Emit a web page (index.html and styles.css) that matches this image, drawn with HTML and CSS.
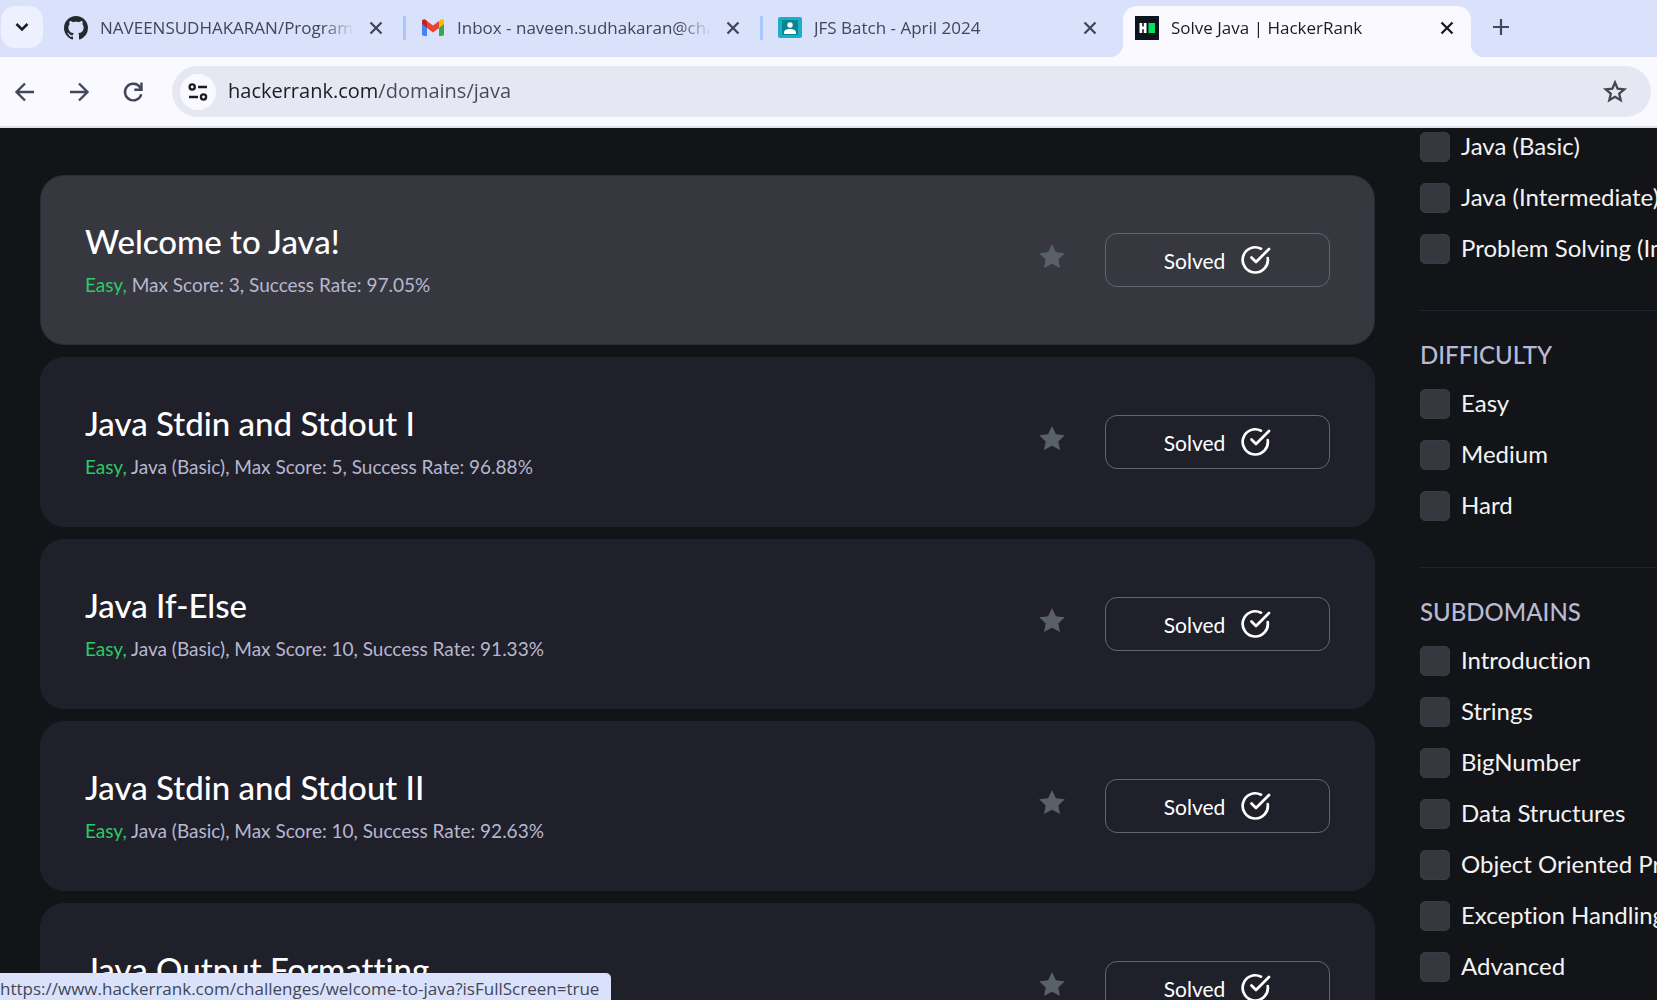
FILE: index.html
```html
<!DOCTYPE html>
<html lang="en">
<head>
<meta charset="utf-8">
<meta name="viewport" content="width=device-width, initial-scale=1">
<title>Solve Java | HackerRank</title>
<link rel="stylesheet" href="styles.css">
</head>
<body>
<svg class="defs" aria-hidden="true">
  <symbol id="close" viewBox="0 0 20 20"><path d="M4.500 4.500l11 11M15.500 4.500l-11 11" fill="none" stroke="currentColor" stroke-width="2.300"/></symbol>
  <symbol id="star" viewBox="0 0 26 32"><path d="M13 0l3.900 8.200 8.900 1.100-6.500 6.200 1.700 8.500-8-4.200-8 4.200 1.700-8.500L.2 9.300l8.900-1.100z" fill="currentColor"/></symbol>
  <symbol id="check" viewBox="0 0 30 30"><path d="M20 3.700A12.600 12.600 0 1 0 26.700 13M10.500 12.500l4.500 4.500L28 4" fill="none" stroke="currentColor" stroke-width="2.700" stroke-linecap="round" stroke-linejoin="round"/></symbol>
</svg>

<header class="browser">
  <div class="tab-strip">
    <button class="tab-search" aria-label="Search tabs"><svg width="16" height="16" viewBox="0 0 16 16"><path d="M2.500 5l5.500 5.500L13.500 5" fill="none" stroke="currentColor" stroke-width="2.500"/></svg></button>
    <div class="tabs">
      <div class="tab">
        <svg class="favicon" viewBox="0 0 16 16"><path fill="#24292f" d="M8 0C3.580 0 0 3.580 0 8c0 3.540 2.290 6.530 5.470 7.590.4.070.55-.17.55-.38 0-.19-.01-.82-.01-1.490-2.010.37-2.530-.49-2.690-.94-.09-.23-.48-.94-.82-1.130-.28-.15-.68-.52-.01-.53.63-.01 1.080.58 1.230.82.72 1.210 1.870.87 2.330.66.07-.52.28-.87.51-1.070-1.780-.2-3.640-.89-3.640-3.950 0-.87.31-1.590.82-2.150-.08-.2-.36-1.020.08-2.120 0 0 .67-.21 2.200.82.64-.18 1.320-.27 2-.27s1.360.09 2 .27c1.530-1.040 2.200-.82 2.200-.82.44 1.100.16 1.920.08 2.120.51.56.82 1.270.82 2.150 0 3.070-1.870 3.750-3.650 3.950.29.25.54.73.54 1.480 0 1.070-.01 1.930-.01 2.200 0 .21.15.46.55.38A8.010 8.010 0 0 0 16 8c0-4.420-3.580-8-8-8z"/></svg>
        <span class="tab-title">NAVEENSUDHAKARAN/Programs</span>
        <button class="tab-close" aria-label="Close tab"><svg><use href="#close"/></svg></button>
      </div>
      <div class="tab">
        <svg class="favicon" viewBox="0 0 24 24"><path fill="#4285f4" d="M1 5l5 4v12H3a2 2 0 0 1-2-2z" transform="translate(0 -1)"/><path fill="#34a853" d="M18 8l5-4v14a2 2 0 0 1-2 2h-3z"/><path fill="#ea4335" d="M6 5l6 4.500L18 5v7l-6 4.500L6 12z"/><path fill="#fbbc04" d="M18 12V5l1.500-1.200C21 2.700 23 3.700 23 5.500V8z"/><path fill="#c5221f" d="M6 12V5L4.500 3.800C3 2.700 1 3.700 1 5.500V8z"/></svg>
        <span class="tab-title">Inbox - naveen.sudhakaran@chandusoft</span>
        <button class="tab-close" aria-label="Close tab"><svg><use href="#close"/></svg></button>
      </div>
      <div class="tab">
        <svg class="favicon" viewBox="0 0 24 24"><rect y="1" width="24" height="21" rx="2" fill="#16b1c9"/><rect x="4" y="4" width="16" height="15" fill="#0b8490"/><circle cx="12" cy="9" r="2.700" fill="#fff"/><path d="M6 18v-1.500c0-2.500 3-3.500 6-3.500s6 1 6 3.500V18z" fill="#fff"/></svg>
        <span class="tab-title">JFS Batch - April 2024</span>
        <button class="tab-close" aria-label="Close tab"><svg><use href="#close"/></svg></button>
      </div>
      <div class="tab tab-active">
        <svg class="favicon" viewBox="0 0 24 24"><rect width="24" height="24" fill="#0e141e"/><path d="M4.500 7h2.700v3.500h1.600V7h2.700v10H8.800v-3.700H7.200V17H4.500z" fill="#fff"/><rect x="13.500" y="7" width="6.500" height="10" fill="#05e35e"/></svg>
        <span class="tab-title">Solve Java | HackerRank</span>
        <button class="tab-close" aria-label="Close tab"><svg><use href="#close"/></svg></button>
      </div>
    </div>
    <button class="new-tab" aria-label="New tab"><svg width="20" height="20" viewBox="0 0 20 20"><path d="M10 2v16M2 10h16" stroke="currentColor" stroke-width="2.200"/></svg></button>
  </div>

  <div class="toolbar">
    <button class="nav-button" aria-label="Back"><svg viewBox="0 0 24 24"><path d="M21 12H4M12 3.500L3.500 12l8.500 8.500" fill="none" stroke="currentColor" stroke-width="2.400"/></svg></button>
    <button class="nav-button" aria-label="Forward"><svg viewBox="0 0 24 24"><path d="M3 12h17M12 3.500l8.500 8.500-8.500 8.500" fill="none" stroke="currentColor" stroke-width="2.400"/></svg></button>
    <button class="nav-button" aria-label="Reload"><svg viewBox="0 0 24 24"><path d="M20.300 14.200A8.300 8.300 0 1 1 19 7.200l1.500 2M20.500 2.500v7.200h-7.200" fill="none" stroke="currentColor" stroke-width="2.400"/></svg></button>
    <div class="address-bar">
      <button class="site-info" aria-label="View site information"><svg width="20" height="18" viewBox="0 0 20 18"><g fill="none" stroke="currentColor" stroke-width="2.300"><circle cx="4.200" cy="4" r="2.600"/><path d="M10 4h9M1 14h9"/><circle cx="15.500" cy="14" r="2.600"/></g></svg></button>
      <input class="address" type="text" aria-label="Address" value="hackerrank.com/domains/java">
      <button class="bookmark-page" aria-label="Bookmark this tab"><svg width="26" height="26" viewBox="0 0 26 26"><path d="M13 3.500l2.600 6.200 6.700.6-5.100 4.400 1.500 6.500-5.700-3.400-5.700 3.400 1.500-6.500-5.100-4.400 6.700-.6z" fill="none" stroke="currentColor" stroke-width="2.300"/></svg></button>
    </div>
  </div>
</header>

<main class="page">
  <section class="challenges" aria-label="Challenges">
    <article class="card card-hover">
      <div class="card-text">
        <h2 class="card-title"><a href="#welcome-to-java">Welcome to Java!</a></h2>
        <p class="card-meta"><span class="easy">Easy,</span> Max Score: 3, Success Rate: 97.05%</p>
      </div>
      <button class="favorite" aria-label="Bookmark challenge"><svg><use href="#star"/></svg></button>
      <button class="solved">Solved<svg><use href="#check"/></svg></button>
    </article>
    <article class="card">
      <div class="card-text">
        <h2 class="card-title"><a href="#java-stdin-and-stdout-1">Java Stdin and Stdout I</a></h2>
        <p class="card-meta"><span class="easy">Easy,</span> Java (Basic), Max Score: 5, Success Rate: 96.88%</p>
      </div>
      <button class="favorite" aria-label="Bookmark challenge"><svg><use href="#star"/></svg></button>
      <button class="solved">Solved<svg><use href="#check"/></svg></button>
    </article>
    <article class="card">
      <div class="card-text">
        <h2 class="card-title"><a href="#java-if-else">Java If-Else</a></h2>
        <p class="card-meta"><span class="easy">Easy,</span> Java (Basic), Max Score: 10, Success Rate: 91.33%</p>
      </div>
      <button class="favorite" aria-label="Bookmark challenge"><svg><use href="#star"/></svg></button>
      <button class="solved">Solved<svg><use href="#check"/></svg></button>
    </article>
    <article class="card">
      <div class="card-text">
        <h2 class="card-title"><a href="#java-stdin-stdout">Java Stdin and Stdout II</a></h2>
        <p class="card-meta"><span class="easy">Easy,</span> Java (Basic), Max Score: 10, Success Rate: 92.63%</p>
      </div>
      <button class="favorite" aria-label="Bookmark challenge"><svg><use href="#star"/></svg></button>
      <button class="solved">Solved<svg><use href="#check"/></svg></button>
    </article>
    <article class="card">
      <div class="card-text">
        <h2 class="card-title"><a href="#java-output-formatting">Java Output Formatting</a></h2>
        <p class="card-meta"><span class="easy">Easy,</span> Java (Basic)</p>
      </div>
      <button class="favorite" aria-label="Bookmark challenge"><svg><use href="#star"/></svg></button>
      <button class="solved">Solved<svg><use href="#check"/></svg></button>
    </article>
  </section>

  <aside class="filters" aria-label="Filters">
    <div class="filter-group">
      <label class="option"><input type="checkbox">Java (Basic)</label>
      <label class="option"><input type="checkbox">Java (Intermediate)</label>
      <label class="option"><input type="checkbox">Problem Solving (Intermediate)</label>
    </div>
    <div class="filter-group">
      <h3 class="filter-title">DIFFICULTY</h3>
      <label class="option"><input type="checkbox">Easy</label>
      <label class="option"><input type="checkbox">Medium</label>
      <label class="option"><input type="checkbox">Hard</label>
    </div>
    <div class="filter-group">
      <h3 class="filter-title">SUBDOMAINS</h3>
      <label class="option"><input type="checkbox">Introduction</label>
      <label class="option"><input type="checkbox">Strings</label>
      <label class="option"><input type="checkbox">BigNumber</label>
      <label class="option"><input type="checkbox">Data Structures</label>
      <label class="option"><input type="checkbox">Object Oriented Programming</label>
      <label class="option"><input type="checkbox">Exception Handling</label>
      <label class="option"><input type="checkbox">Advanced</label>
    </div>
  </aside>
</main>

<div class="status">https://www.hackerrank.com/challenges/welcome-to-java?isFullScreen=true</div>
</body>
</html>
```
FILE: styles.css
```css
* { box-sizing: border-box; }

body {
  margin: 0;
  height: 100vh;
  display: flex;
  flex-direction: column;
  overflow: hidden;
  background: #131418;
  color: #fff;
  font-family: Lato, sans-serif;
  font-variant-ligatures: none;
}

button {
  display: flex;
  align-items: center;
  justify-content: center;
  flex: none;
  padding: 0;
  border: 0;
  background: none;
  color: inherit;
  font: inherit;
}

.defs { position: absolute; width: 0; height: 0; }

/* Browser chrome */
.browser {
  flex: none;
  background: #faf9ff;
  border-bottom: 2px solid #dfe2ec;
  color: #414758;
  font-family: "Open Sans", sans-serif;
}

.tab-strip {
  display: flex;
  height: 57px;
  padding-top: 6px;
  background: #dae1fa;
}

.tab-search {
  width: 42px;
  height: 42px;
  margin: 0 9px 0 1px;
  border-radius: 14px;
  background: #edf0fe;
  color: #1b1c21;
}

.tabs { display: flex; gap: 9px; min-width: 0; }

.tab {
  position: relative;
  display: flex;
  align-items: center;
  gap: 12px;
  flex: 0 1 348px;
  width: 348px;
  min-width: 0;
  padding: 0 14px 8px 12px;
}

.tab:not(:nth-last-child(-n+2))::after {
  content: "";
  position: absolute;
  top: 10px;
  right: -6px;
  width: 3px;
  height: 24px;
  background: #a9c7fb;
}

.tab-active {
  border-radius: 14px 14px 0 0;
  background: #faf9ff;
  color: #1b1c21;
}

.tab-active::before,
.tab-active::after {
  content: "";
  position: absolute;
  bottom: 0;
  width: 14px;
  height: 14px;
}

.tab-active::before {
  left: -14px;
  background: radial-gradient(circle at 0 0, #dae1fa 14px, #faf9ff 15px);
}

.tab.tab-active::after {
  right: -14px;
  background: radial-gradient(circle at 100% 0, #dae1fa 14px, #faf9ff 15px);
}

.favicon { flex: none; width: 24px; height: 24px; }

.tab-title {
  flex: 1;
  min-width: 0;
  overflow: hidden;
  white-space: nowrap;
  font-size: 17px;
  line-height: 28px;
  mask-image: linear-gradient(to left, transparent, #000 32px);
}

.tab-close, .tab-close svg { width: 20px; height: 20px; }

.new-tab { width: 40px; height: 42px; margin-left: 10px; }

.toolbar {
  display: flex;
  align-items: center;
  gap: 14px;
  padding: 9px 6px 9px 5px;
}

.nav-button { width: 40px; height: 40px; }
.nav-button svg { width: 24px; height: 24px; }

.address-bar {
  flex: 1;
  display: flex;
  align-items: center;
  gap: 12px;
  min-width: 0;
  height: 51px;
  margin-left: 5px;
  padding: 0 20px 0 8px;
  border-radius: 26px;
  background: #e5e8f3;
}

.site-info {
  width: 36px;
  height: 36px;
  border-radius: 50%;
  background: #faf9ff;
  color: #1b1c21;
}

.address {
  flex: 1;
  min-width: 0;
  padding: 0 0 2px;
  border: 0;
  outline: 0;
  /* the host is darker than the path */
  background: linear-gradient(to right, #1b1c21 150px, #474a55 150px) text;
  color: transparent;
  font: inherit;
  font-size: 20px;
  line-height: 32px;
}

.bookmark-page { width: 32px; height: 32px; color: #45474c; }

/* Page */
.page {
  flex: 1;
  min-height: 0;
  display: grid;
  grid-template-columns: minmax(0, 1fr) 237px;
  gap: 45px;
  padding-left: 40px;
  overflow: hidden;
}

.challenges {
  display: flex;
  flex-direction: column;
  gap: 12px;
  padding-top: 47px;
}

.card {
  display: flex;
  align-items: center;
  flex: none;
  height: 170px;
  padding: 0 44px;
  border: 1px solid #20202a;
  border-radius: 24px;
  background: #20202a;
}

.card-hover { border-color: #2b2b35; background: #373740; }

.card-text { flex: 1; min-width: 0; }

.card-title {
  margin: 0;
  font-size: 33px;
  font-weight: 500;
  line-height: 40px;
}

.card-title a { color: inherit; text-decoration: none; }

.card-meta {
  margin: 10px 0 0;
  color: #b7b7cf;
  font-size: 19px;
  line-height: 28px;
}

.easy { color: #2ec866; }

.favorite { margin-right: 40px; color: #596069; }
.favorite svg { width: 26px; height: 32px; }

.solved {
  gap: 16px;
  width: 225px;
  height: 54px;
  border: 1px solid #656571;
  border-radius: 12px;
  font-size: 21px;
}

.solved svg { width: 30px; height: 30px; }

.filters { padding-top: 4px; overflow: hidden; white-space: nowrap; }

.filter-group {
  display: flex;
  flex-direction: column;
  gap: 21px;
  padding-bottom: 46px;
}

.filter-group + .filter-group {
  padding-top: 29px;
  border-top: 1px solid #1b2630;
}

.filter-title {
  margin: 0 0 -2px;
  color: #b9b9d3;
  font-size: 24px;
  font-weight: 500;
  line-height: 30px;
}

.option {
  display: flex;
  align-items: flex-start;
  gap: 11px;
  height: 30px;
  color: #f3f3f3;
  font-size: 24px;
  line-height: 28px;
}

.option input {
  appearance: none;
  flex: none;
  width: 30px;
  height: 30px;
  margin: 0;
  border: 1px solid #3b3b42;
  border-radius: 5px;
  background: #373740;
}

.status {
  position: fixed;
  left: 0;
  bottom: 0;
  height: 27px;
  padding-right: 12px;
  border-radius: 0 5px 0 0;
  background: #dae1fa;
  color: #414758;
  font: 17px/32px "Open Sans", sans-serif;
}
```
